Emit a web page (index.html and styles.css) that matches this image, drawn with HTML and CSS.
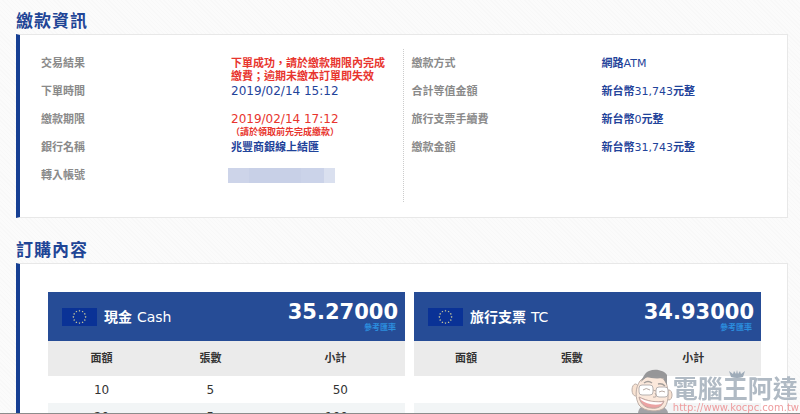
FILE: index.html
```html
<!DOCTYPE html>
<html lang="zh-Hant">
<head>
    <meta charset="UTF-8">
    <title>繳款資訊</title>
    <link rel="stylesheet" href="styles.css">
</head>
<body>
<svg class="defs" width="0" height="0" aria-hidden="true">
    <symbol id="star" viewBox="-5 -5 10 10">
        <path d="M0-5 1.2-1.6H4.8L1.9.6 3 4 0 2-3 4-1.9.6-4.8-1.6H-1.2Z"/>
    </symbol>
    <symbol id="eu" viewBox="0 0 35 18">
        <rect width="35" height="18" fill="#0a3296"/>
        <g fill="#d8d49a">
            <use href="#star" x="16.3" y="1.6" width="2.4" height="2.4"/>
            <use href="#star" x="19.4" y="2.4" width="2.4" height="2.4"/>
            <use href="#star" x="21.6" y="4.7" width="2.4" height="2.4"/>
            <use href="#star" x="22.4" y="7.8" width="2.4" height="2.4"/>
            <use href="#star" x="21.6" y="10.9" width="2.4" height="2.4"/>
            <use href="#star" x="19.4" y="13.1" width="2.4" height="2.4"/>
            <use href="#star" x="16.3" y="13.9" width="2.4" height="2.4"/>
            <use href="#star" x="13.2" y="13.1" width="2.4" height="2.4"/>
            <use href="#star" x="11" y="10.9" width="2.4" height="2.4"/>
            <use href="#star" x="10.2" y="7.8" width="2.4" height="2.4"/>
            <use href="#star" x="11" y="4.7" width="2.4" height="2.4"/>
            <use href="#star" x="13.2" y="2.4" width="2.4" height="2.4"/>
        </g>
    </symbol>
</svg>

<main class="page">
    <section>
        <h2 class="title">繳款資訊</h2>
        <div class="panel info">
            <dl class="list">
                <div class="item"><dt>交易結果</dt><dd class="red">下單成功，請於繳款期限內完成繳費；逾期未繳本訂單即失效</dd></div>
                <div class="item"><dt>下單時間</dt><dd class="date">2019/02/14 15:12</dd></div>
                <div class="item"><dt>繳款期限</dt><dd class="red date">2019/02/14 17:12<small>（請於領取前先完成繳款）</small></dd></div>
                <div class="item"><dt>銀行名稱</dt><dd>兆豐商銀線上結匯</dd></div>
                <div class="item"><dt>轉入帳號</dt><dd><span class="mask"></span></dd></div>
            </dl>
            <dl class="list">
                <div class="item"><dt>繳款方式</dt><dd>網路<span class="num">ATM</span></dd></div>
                <div class="item"><dt>合計等值金額</dt><dd>新台幣<span class="num">31,743</span>元整</dd></div>
                <div class="item"><dt>旅行支票手續費</dt><dd>新台幣<span class="num">0</span>元整</dd></div>
                <div class="item"><dt>繳款金額</dt><dd>新台幣<span class="num">31,743</span>元整</dd></div>
            </dl>
        </div>
    </section>

    <section>
        <h2 class="title">訂購內容</h2>
        <div class="panel order">
            <div class="box">
                <div class="head">
                    <svg class="flag"><use href="#eu"/></svg>
                    <h3>現金 <span class="num">Cash</span></h3>
                    <p class="rate">35.27000<small>參考匯率</small></p>
                </div>
                <table>
                    <thead>
                    <tr><th>面額</th><th>張數</th><th>小計</th></tr>
                    </thead>
                    <tbody>
                    <tr><td>10</td><td>5</td><td>50</td></tr>
                    <tr><td>20</td><td>5</td><td>100</td></tr>
                    </tbody>
                </table>
            </div>
            <div class="box">
                <div class="head">
                    <svg class="flag"><use href="#eu"/></svg>
                    <h3>旅行支票 <span class="num">TC</span></h3>
                    <p class="rate">34.93000<small>參考匯率</small></p>
                </div>
                <table>
                    <thead>
                    <tr><th>面額</th><th>張數</th><th>小計</th></tr>
                    </thead>
                    <tbody>
                    <tr><td></td><td></td><td></td></tr>
                    <tr><td></td><td></td><td></td></tr>
                    </tbody>
                </table>
            </div>
        </div>
    </section>
</main>

<div class="mark">
    <svg class="face" viewBox="0 0 42 46">
        <path d="M7 46C7 41 10 38 14 37L32 39C36 41 37 43 37 46Z" fill="#9a9a9e"/>
        <ellipse cx="4.500" cy="22" rx="3.500" ry="6" fill="#f8dfcd" stroke="#b5a59d"/>
        <ellipse cx="38" cy="27" rx="3" ry="5" fill="#f8dfcd" stroke="#b5a59d"/>
        <path d="M9 13C13 7 31 6 35 14C38 23 38 33 34 39C29 45 13 44 8 37C4 30 4 20 9 13Z" fill="#fbe6d7" stroke="#b5a59d"/>
        <path d="M10 14C12 8 15 4 18 3C25 0 34 3 36 7L36 17C34 14 33 12 32 10C25 11 19 10 16 9C14 10 12 12 10 14Z" fill="#8d8d90"/>
        <path d="M13 15Q17 12 21 15M27 16Q31 15 34 18" fill="none" stroke="#9a9390" stroke-width="1.500"/>
        <rect x="8" y="17" width="14" height="10" rx="3" fill="#fff" stroke="#b0aaa9"/>
        <rect x="25" y="19" width="12" height="10" rx="3" fill="#fff" stroke="#b0aaa9"/>
        <path d="M22 22L25 23M12 22Q15 19 19 22M28 24Q31 22 34 24M24 25Q27 30 22 29" fill="none" stroke="#b0a29b"/>
        <path d="M8 29C16 33 26 35 33 33C31 39 26 41 20 40C14 40 9 35 8 29Z" fill="#ea9a9a" stroke="#b5a09a"/>
        <path d="M9 30C16 34 26 35 32 34L30 36C22 38 14 35 10 32Z" fill="#fff"/>
    </svg>
    <div class="mark-text">
        <svg class="crown" viewBox="0 0 16 8">
            <path d="M2 7 0 1 4 4 5 1 7 4 8 0 9 4 11 1 12 4 16 1 14 7Q8 9 2 7Z" fill="#9eabb8"/>
        </svg>
        <strong>電腦王阿達</strong>
        <span>http://www.kocpc.com.tw</span>
    </div>
</div>
</body>
</html>
```

FILE: styles.css
```css
body, h2, h3, p, dl, dt, dd {
    margin: 0;
    padding: 0;
}

* {
    box-sizing: border-box;
}

body {
    height: 100vh;
    overflow: hidden;
    background: #fafafa repeating-linear-gradient(45deg, #f8f8f8 0, #f8f8f8 1px, #fbfbfb 1px, #fbfbfb 3px);
    font: 11px/13px "DejaVu Sans", "Noto Sans CJK TC", sans-serif;
    color: #333;
}

/* bottom edge of the window */
body::after {
    content: "";
    position: fixed;
    left: 0;
    right: 0;
    bottom: 0;
    height: 1px;
    background: #8c8c8c;
}

.defs {
    position: absolute;
}

.page {
    height: 100%;
    overflow: hidden;
    padding: 10px 12px 0 16px;
}

.title {
    margin-bottom: 1px;
    font-size: 17px;
    line-height: 23px;
    letter-spacing: 1px;
    color: #1f4596;
}

.panel {
    display: grid;
    margin-bottom: 21px;
    border: 1px solid #e8e8e8;
    border-left: 4px solid #163f93;
    background: #fff;
}

/* payment info */
.info {
    grid-template-columns: 1fr 1fr;
    padding: 14px 0 15px;
}

.list {
    padding: 8px 8px 5px;
}

.list:first-child {
    padding-left: 21px;
    border-right: 1px dotted #ccc;
}

.item {
    display: flex;
    height: 28px;
}

.item dt {
    flex: none;
    width: 190px;
    font-weight: bold;
    color: #8a8a8a;
}

.item dd {
    max-width: 160px;
    font-weight: bold;
    color: #1f439a;
}

.item .red {
    color: #e8352e;
}

.item .date {
    font-size: 12px;
    font-weight: normal;
}

.item small {
    display: block;
    font-size: 9px;
    font-weight: bold;
    line-height: 12px;
    white-space: nowrap;
}

.num {
    font-weight: normal;
}

.mask {
    display: block;
    width: 107px;
    height: 15px;
    margin: -1px 0 0 -3px;
    background: linear-gradient(90deg, #cdd4e9 0 20%, #c8d0e7 20% 68%, #cbd3e9 68% 90%, #dae0ef 90%);
}

/* order */
.order {
    grid-template-columns: 357fr 347fr;
    gap: 9px;
    padding: 28px 26px 28px 28px;
}

.head {
    display: flex;
    align-items: center;
    height: 49px;
    padding: 0 7px 0 14px;
    background: #264c96;
    color: #fff;
}

.flag {
    width: 35px;
    height: 18px;
    margin-right: 7px;
}

.head h3 {
    font-size: 14px;
    line-height: 20px;
}

.rate {
    margin-left: auto;
    font-size: 21px;
    font-weight: bold;
    line-height: 22px;
    text-align: right;
}

.rate small {
    display: block;
    padding-right: 2px;
    font-size: 8px;
    line-height: 9px;
    color: #2c8ddd;
}

table {
    width: 100%;
    border-collapse: collapse;
    table-layout: fixed;
}

th, td {
    height: 27px;
    padding: 0;
    text-align: center;
}

th {
    width: 31%;
    height: 35px;
    background: #ebebeb;
}

th:first-child {
    width: 30%;
}

th:last-child {
    width: 39%;
}

td {
    padding-top: 2px;
    font-size: 12px;
}

td:last-child {
    padding-right: 57px;
    text-align: right;
}

tbody tr:nth-child(even) {
    background: #f2f5f6;
}

/* site watermark over the page */
.mark {
    position: fixed;
    right: 1px;
    bottom: 0;
    display: flex;
    align-items: flex-end;
}

.face {
    width: 42px;
    height: 46px;
    opacity: 0.9;
}

.mark-text {
    position: relative;
}

.crown {
    position: absolute;
    top: -7px;
    left: 56px;
    width: 16px;
    height: 8px;
}

.mark strong {
    display: block;
    font-size: 25px;
    line-height: 25px;
    color: #b0bac4;
}

.mark span {
    display: block;
    font-size: 10px;
    line-height: 12px;
    color: #ee9c9e;
}
```
